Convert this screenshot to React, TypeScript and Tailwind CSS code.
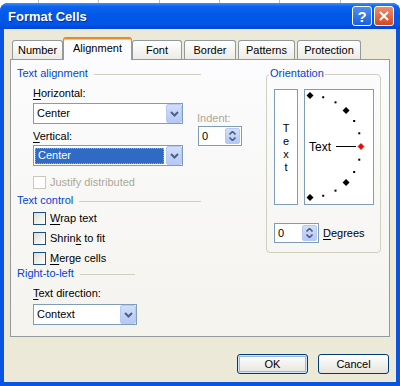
const tabs = [
  { name: "Number", w: "w-[51px]", ml: "" },
  { name: "Alignment", w: "w-[69px]", ml: "", active: true },
  { name: "Font", w: "w-[50px]", ml: "" },
  { name: "Border", w: "w-[52px]", ml: "ml-[2px]" },
  { name: "Patterns", w: "w-[57px]", ml: "ml-[2px]" },
  { name: "Protection", w: "w-[64px]", ml: "ml-[2px]" },
];

function U({ children }: { children: string }) {
  return <span className="underline decoration-1 underline-offset-[2px]">{children}</span>;
}

function Header({ label, w }: { label: string; w: string }) {
  return (
    <div className={`flex h-[13px] items-center ${w}`}>
      <span className="text-[#0046d5]">{label}</span>
      <div className="ml-[6px] mt-[2px] h-px flex-1 bg-[#d0d0bf]" />
    </div>
  );
}

function Chevron() {
  return (
    <svg width="9" height="6" viewBox="0 0 9 6">
      <polyline points="1,1 4.5,4.5 8,1" fill="none" stroke="#4d6185" strokeWidth="2" />
    </svg>
  );
}

function DropBtn() {
  return (
    <div className="flex h-[19px] w-[16px] items-center justify-center rounded-[2px] border border-[#b7c9f3] bg-gradient-to-b from-[#d2def9] to-[#b5c8f5]">
      <Chevron />
    </div>
  );
}

function Combo({ w, text, selected }: { w: string; text: string; selected?: boolean }) {
  return (
    <div className={`flex h-[21px] border border-[#7f9db9] bg-white ${w}`}>
      <div className="flex flex-1 items-center">
        {selected ? (
          <span className="ml-[1px] mr-[2px] flex h-[16px] flex-1 items-center border border-dotted border-[#c8a24a] bg-[#316ac5] pl-[2px] text-white">
            {text}
          </span>
        ) : (
          <span className="pl-[3px]">{text}</span>
        )}
      </div>
      <DropBtn />
    </div>
  );
}

function Spinner({ w }: { w: string }) {
  return (
    <div className={`flex h-[20px] border border-[#7f9db9] bg-white ${w}`}>
      <span className="flex flex-1 items-center pl-[3px]">0</span>
      <div className="my-[1px] mr-[1px] flex w-[15px] flex-col items-center justify-center gap-[2px] rounded-[2px] border border-[#b7c9f3] bg-gradient-to-b from-[#d2def9] to-[#b5c8f5]">
        <svg width="7" height="4" viewBox="0 0 7 4">
          <polyline points="0.5,3.5 3.5,0.5 6.5,3.5" fill="none" stroke="#4d6185" strokeWidth="1.6" />
        </svg>
        <svg width="7" height="4" viewBox="0 0 7 4">
          <polyline points="0.5,0.5 3.5,3.5 6.5,0.5" fill="none" stroke="#4d6185" strokeWidth="1.6" />
        </svg>
      </div>
    </div>
  );
}

function Check({ children, disabled, mt }: { children: React.ReactNode; disabled?: boolean; mt: string }) {
  return (
    <div className={`ml-[16px] flex h-[13px] items-center ${mt}`}>
      <div
        className={`h-[13px] w-[13px] border ${
          disabled ? "border-[#cac8bb] bg-white" : "border-[#1c5180] bg-gradient-to-br from-[#dcdcd7] to-white"
        }`}
      />
      <span className={`ml-[4px] ${disabled ? "text-[#aca899]" : ""}`}>{children}</span>
    </div>
  );
}

function Dial() {
  const cx = 5;
  const cy = 56.5;
  const r = 51;
  const marks = [];
  for (let a = -90; a <= 90; a += 15) {
    const rad = (a * Math.PI) / 180;
    const x = cx + r * Math.cos(rad);
    const y = cy + r * Math.sin(rad);
    if (a === 0) continue;
    if (a % 45 === 0) {
      marks.push(
        <polygon key={a} points={`${x},${y - 3.5} ${x + 3.5},${y} ${x},${y + 3.5} ${x - 3.5},${y}`} fill="#000" />
      );
    } else {
      marks.push(<rect key={a} x={x - 1} y={y - 1} width="2" height="2" fill="#000" />);
    }
  }
  return (
    <svg width="68" height="114" viewBox="0 0 68 114">
      {marks}
      <text x="4" y="61" fontSize="12" fontFamily="'Liberation Sans', Arial, sans-serif" fill="#000">
        Text
      </text>
      <line x1="31" y1="56.5" x2="51" y2="56.5" stroke="#000" strokeWidth="1" />
      <polygon points="56,53.5 59,56.5 56,59.5 53,56.5" fill="#ff0000" stroke="#a00000" strokeWidth="0.6" />
    </svg>
  );
}

export default function App() {
  return (
    <div className="relative h-[386px] w-[400px] overflow-hidden bg-white font-['Liberation_Sans',Arial,sans-serif] text-[11px] leading-[13px] text-black">
      {/* sheet grid behind */}
      <div className="flex h-[3px] pl-[38px]">
        {[0, 1, 2, 3, 4, 5].map((i) => (
          <div key={i} className="h-full w-[64px] border-l border-[#c0c0c0]" />
        ))}
      </div>

      {/* WINDOW */}
      <div className="flex h-[383px] w-[400px] flex-col overflow-hidden rounded-t-[8px] bg-[#0a54e4]">
        {/* TITLE BAR */}
        <div className="flex h-[26px] items-center bg-[linear-gradient(180deg,#3d8ffb_0%,#0c62ee_14%,#0058e8_50%,#0255e6_82%,#0045d0_100%)] pl-[8px] pr-[6px]">
          <span className="flex-1 pt-[1px] text-[13px] font-bold text-white [text-shadow:1px_1px_0_#0b2a8a]">
            Format Cells
          </span>
          <div className="flex h-[20px] w-[20px] items-center justify-center rounded-[3px] border border-white bg-gradient-to-b from-[#4d8ff5] to-[#1d5ee0] text-[15px] font-bold text-white">
            ?
          </div>
          <div className="ml-[2px] flex h-[20px] w-[20px] items-center justify-center rounded-[3px] border border-white bg-gradient-to-b from-[#ee8b6c] to-[#d6461f]">
            <svg width="10" height="10" viewBox="0 0 10 10">
              <path d="M1 1 L9 9 M9 1 L1 9" stroke="#fff" strokeWidth="2" />
            </svg>
          </div>
        </div>

        {/* BODY */}
        <div className="mx-[4px] mb-[4px] flex flex-1 flex-col bg-[#ece9d8]">
          {/* TABS */}
          <div className="flex h-[22px] items-end pl-[8px] pt-0 mt-[8px]">
            {tabs.map((t) =>
              t.active ? (
                <div
                  key={t.name}
                  className={`relative z-10 -mb-px flex h-[23px] items-center justify-center rounded-t-[3px] border-x border-t-2 border-x-[#919b9c] border-t-[#e68b2c] bg-[#fcfcfe] pb-[2px] shadow-[inset_0_1px_0_#ffc83c] ${t.w}`}
                >
                  {t.name}
                </div>
              ) : (
                <div
                  key={t.name}
                  className={`flex h-[19px] items-center justify-center rounded-t-[3px] border-x border-t border-[#919b9c] bg-gradient-to-b from-white to-[#ecebe6] ${t.w} ${t.ml}`}
                >
                  {t.name}
                </div>
              )
            )}
          </div>

          {/* PANEL */}
          <div className="ml-[6px] flex h-[278px] w-[380px] border border-[#919b9c] bg-gradient-to-b from-[#fcfcfe] to-[#f4f3ee] pl-[6px] pt-[7px]">
            {/* LEFT */}
            <div className="flex w-[226px] flex-col">
              <Header label="Text alignment" w="w-[184px]" />
              <div className="mt-[7px] flex">
                <div className="ml-[16px] flex w-[150px] flex-col">
                  <span>
                    <U>H</U>orizontal:
                  </span>
                  <div className="mt-[3px]">
                    <Combo w="w-[150px]" text="Center" />
                  </div>
                  <span className="mt-[6px]">
                    <U>V</U>ertical:
                  </span>
                  <div className="mt-[2px]">
                    <Combo w="w-[150px]" text="Center" selected />
                  </div>
                </div>
                <div className="ml-[14px] flex flex-col">
                  <span className="mt-[25px] text-[#aca899]">Indent:</span>
                  <div className="ml-[1px] mt-[1px]">
                    <Spinner w="w-[44px]" />
                  </div>
                </div>
              </div>
              <Check disabled mt="mt-[10px]">
                Justify distributed
              </Check>
              <div className="mt-[5px]">
                <Header label="Text control" w="w-[184px]" />
              </div>
              <Check mt="mt-[5px]">
                <U>W</U>rap text
              </Check>
              <Check mt="mt-[7px]">
                <>
                  Shrin<U>k</U> to fit
                </>
              </Check>
              <Check mt="mt-[7px]">
                <>
                  <U>M</U>erge cells
                </>
              </Check>
              <div className="mt-[2px]">
                <Header label="Right-to-left" w="w-[118px]" />
              </div>
              <span className="ml-[16px] mt-[7px]">
                <U>T</U>ext direction:
              </span>
              <div className="ml-[16px] mt-[4px]">
                <Combo w="w-[104px]" text="Context" />
              </div>
            </div>

            {/* ORIENTATION */}
            <div className="relative ml-[23px] mt-[7px] flex h-[179px] w-[115px] flex-col rounded-[4px] border border-[#d0d0bf]">
              <span className="absolute left-[2px] top-[-8px] bg-[#fbfbfb] px-[1px] text-[#0046d5]">Orientation</span>
              <div className="ml-[7px] mt-[14px] flex">
                <div className="flex h-[116px] w-[24px] flex-col items-center justify-center border border-[#7f9db9] bg-white pt-[2px]">
                  <span>T</span>
                  <span>e</span>
                  <span>x</span>
                  <span>t</span>
                </div>
                <div className="ml-[6px] h-[116px] w-[70px] border border-[#7f9db9] bg-white">
                  <Dial />
                </div>
              </div>
              <div className="ml-[7px] mt-[18px] flex items-center">
                <Spinner w="w-[45px]" />
                <span className="ml-[4px]">
                  <U>D</U>egrees
                </span>
              </div>
            </div>
          </div>

          {/* BUTTONS */}
          <div className="mt-[17px] flex justify-end gap-[10px] pr-[7px]">
            <button className="flex h-[20px] w-[71px] items-center justify-center rounded-[3px] border border-[#003c74] bg-gradient-to-b from-white to-[#e6e4dc] shadow-[inset_0_0_0_1px_#cee7ff,inset_0_0_0_2px_#98b8ea]">
              OK
            </button>
            <button className="flex h-[20px] w-[71px] items-center justify-center rounded-[3px] border border-[#003c74] bg-gradient-to-b from-white to-[#e6e4dc]">
              Cancel
            </button>
          </div>
        </div>
      </div>
    </div>
  );
}
